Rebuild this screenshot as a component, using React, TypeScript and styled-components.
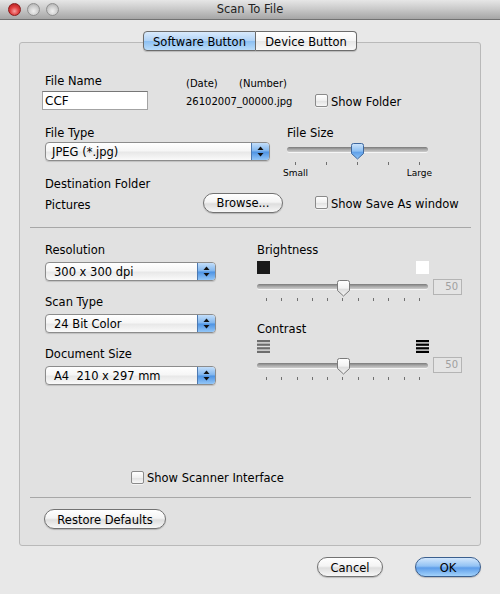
import React from "react";
import styled, { createGlobalStyle, css } from "styled-components";

const GlobalStyle = createGlobalStyle`
  html, body { margin: 0; padding: 0; }
  body {
    font-family: "DejaVu Sans", "Liberation Sans", sans-serif;
    font-size: 11.5px;
    color: #000;
    background: #e8e8e8;
  }
  * { box-sizing: border-box; }
`;

const Window = styled.div`
  width: 500px;
  height: 594px;
  background: #e8e8e8;
  display: flex;
  flex-direction: column;
  overflow: hidden;
`;

const TitleBar = styled.div`
  height: 20px;
  flex: none;
  display: grid;
  grid-template-columns: 1fr auto 1fr;
  align-items: center;
  background: linear-gradient(#e6e6e6, #cbcbcb 45%, #b3b3b3 80%, #a6a6a6);
  border-bottom: 1px solid #727272;
`;

const Lights = styled.div`
  display: flex;
  gap: 6px;
  padding-left: 8px;
`;

const Light = styled.span<{ $red?: boolean }>`
  width: 13px;
  height: 13px;
  border-radius: 50%;
  border: 1px solid ${(p) => (p.$red ? "#8a1a1a" : "#8e8e8e")};
  background: ${(p) =>
    p.$red
      ? "radial-gradient(circle at 50% 65%, #f7a0a0 0%, #e04040 45%, #a81414 100%)"
      : "radial-gradient(circle at 50% 65%, #f0f0f0 0%, #cfcfcf 50%, #a5a5a5 100%)"};
`;

const Title = styled.div`
  font-size: 11.5px;
  color: #222;
  line-height: 19px;
`;

const Body = styled.div`
  flex: 1;
  display: flex;
  flex-direction: column;
  padding: 11px 19px 0 19px;
`;

const Tabs = styled.div`
  align-self: center;
  display: flex;
  height: 20px;
  margin-bottom: -9px;
  position: relative;
  z-index: 1;
  box-shadow: 0 1px 1px rgba(0, 0, 0, 0.18);
  border-radius: 4px;
`;

const Tab = styled.div<{ $w: number; $active?: boolean; $first?: boolean }>`
  width: ${(p) => p.$w}px;
  height: 20px;
  border: 1px solid #6c6c6c;
  display: flex;
  align-items: center;
  justify-content: center;
  padding-top: 1px;
  ${(p) =>
    p.$first
      ? css`
          border-radius: 4px 0 0 4px;
        `
      : css`
          border-left: none;
          border-radius: 0 4px 4px 0;
        `}
  background: ${(p) =>
    p.$active
      ? "linear-gradient(#d9eafc, #b1d3f6 48%, #8dc0f2 52%, #b9dcfa)"
      : "linear-gradient(#ffffff, #f5f5f5 48%, #e7e7e7 52%, #f8f8f8)"};
`;

const Group = styled.div`
  height: 504px;
  border: 1px solid #b9b9b9;
  border-radius: 3px;
  background: #e1e1e1;
  display: flex;
  flex-direction: column;
  padding: 29px 0 16px 0;
`;

const TopSection = styled.div`
  padding-left: 22px;
  display: flex;
  flex-direction: column;
`;

const FileGrid = styled.div`
  display: grid;
  grid-template-columns: 144px 129px auto;
  grid-template-rows: 14px 19px;
  row-gap: 5px;
  align-items: center;
`;

const Label = styled.div<{ $indent?: number; $top?: number }>`
  align-self: start;
  line-height: 14px;
  padding-top: 2px;
  margin-bottom: -2px;
  margin-top: ${(p) => p.$top ?? 0}px;
  padding-left: ${(p) => p.$indent ?? 0}px;
  white-space: nowrap;
`;

const SmallHeads = styled.div`
  display: flex;
  align-self: start;
  margin-top: 6px;
  font-size: 10px;
  line-height: 12px;
`;

const SmallHead = styled.span<{ $w?: number }>`
  width: ${(p) => (p.$w ? `${p.$w}px` : "auto")};
`;

const SmallText = styled.div`
  font-size: 10px;
  line-height: 19px;
  padding-top: 1px;
`;

const TextField = styled.div`
  width: 106px;
  height: 19px;
  background: #fff;
  border: 1px solid #a3a3a3;
  border-top-color: #777;
  padding-left: 2px;
  line-height: 18px;
  font-size: 12px;
`;

const CheckRow = styled.label<{ $indent?: number }>`
  display: flex;
  align-items: center;
  gap: 3px;
  margin-left: ${(p) => p.$indent ?? 0}px;
  white-space: nowrap;
  line-height: 14px;
`;

const CheckText = styled.span`
  padding-top: 2px;
`;

const CheckBox = styled.span`
  width: 13px;
  height: 13px;
  flex: none;
  border: 1px solid #8a8a8a;
  border-radius: 2px;
  background: linear-gradient(#ffffff, #f0f0f0 50%, #e2e2e2 55%, #f7f7f7);
  box-shadow: 0 1px 0 rgba(255, 255, 255, 0.6);
`;

const TypeRow = styled.div`
  display: flex;
  height: 37px;
  margin-top: 14px;
  align-items: flex-start;
`;

const FieldBlock = styled.div<{ $w?: number; $indent?: number }>`
  width: ${(p) => (p.$w ? `${p.$w}px` : "auto")};
  padding-left: ${(p) => p.$indent ?? 0}px;
  display: flex;
  flex-direction: column;
  flex: none;
`;

const PopupWrap = styled.div<{ $w: number; $gap: number }>`
  width: ${(p) => p.$w}px;
  height: 19px;
  margin-top: ${(p) => p.$gap}px;
  display: flex;
  border: 1px solid #8c8c8c;
  border-radius: 4px;
  overflow: hidden;
  background: linear-gradient(#ffffff, #f6f6f6 45%, #e8e8e8 55%, #fafafa);
  box-shadow: 0 1px 1px rgba(0, 0, 0, 0.15);
`;

const PopupText = styled.span<{ $pad: number }>`
  flex: 1;
  padding-left: ${(p) => p.$pad}px;
  line-height: 18px;
  white-space: pre;
`;

const PopupArrow = styled.span`
  width: 18px;
  flex: none;
  border-left: 1px solid #4d79b0;
  background: linear-gradient(#c3defa, #7fb5ee 48%, #4c92e3 52%, #93c6f7);
  display: flex;
  align-items: center;
  justify-content: center;
`;

const SliderBox = styled.div<{ $w: number; $h: number; $top?: number }>`
  position: relative;
  width: ${(p) => p.$w}px;
  height: ${(p) => p.$h}px;
  margin-top: ${(p) => p.$top ?? 0}px;
  flex: none;
`;

const Track = styled.div<{ $top: number }>`
  position: absolute;
  left: 0;
  right: 0;
  top: ${(p) => p.$top}px;
  height: 5px;
  border-radius: 3px;
  background: linear-gradient(#7a7a7a, #a9a9a9 50%, #cdcdcd);
  box-shadow: 0 1px 0 rgba(255, 255, 255, 0.7);
`;

const ThumbSvg = styled.svg<{ $left: number; $top: number }>`
  position: absolute;
  left: ${(p) => p.$left}px;
  top: ${(p) => p.$top}px;
`;

const Ticks = styled.div<{ $w: number; $left: number; $top: number }>`
  width: ${(p) => p.$w}px;
  margin-left: ${(p) => p.$left}px;
  margin-top: ${(p) => p.$top}px;
  height: 3px;
  display: flex;
  justify-content: space-between;
`;

const Tick = styled.span`
  width: 1px;
  height: 3px;
  background: #707070;
`;

const ScaleLabels = styled.div`
  display: flex;
  justify-content: space-between;
  margin: 3px -4px 0 -4px;
  font-size: 9px;
  line-height: 10px;
`;

const DestRow = styled.div`
  display: flex;
  align-items: center;
  height: 19px;
  margin-top: 4px;
`;

const PushButton = styled.button<{ $w: number; $primary?: boolean }>`
  width: ${(p) => p.$w}px;
  height: 20px;
  flex: none;
  padding: 1px 0 0 0;
  border-radius: 10px;
  font-family: "DejaVu Sans", "Liberation Sans", sans-serif;
  font-size: 11.5px;
  color: #000;
  border: 1px solid ${(p) => (p.$primary ? "#3b5f8e" : "#727272")};
  background: ${(p) =>
    p.$primary
      ? "linear-gradient(#d3e7fc, #92c2f4 45%, #5d9de9 55%, #a2d2fb)"
      : "linear-gradient(#ffffff, #f4f4f4 45%, #dedede 55%, #f7f7f7)"};
  box-shadow: 0 1px 1px rgba(0, 0, 0, 0.2);
`;

const Separator = styled.div<{ $top: number }>`
  height: 1px;
  margin: ${(p) => p.$top}px 9px 0 10px;
  background: #a7a7a7;
  flex: none;
`;

const LowerSection = styled.div`
  display: flex;
  margin-top: 13px;
  padding-left: 25px;
`;

const LeftCol = styled.div`
  width: 212px;
  display: flex;
  flex-direction: column;
  gap: 12px;
`;

const RightCol = styled.div`
  display: flex;
  flex-direction: column;
`;

const IconRow = styled.div<{ $top: number }>`
  width: 172px;
  height: 13px;
  margin-top: ${(p) => p.$top}px;
  display: flex;
  justify-content: space-between;
`;

const Swatch = styled.span<{ $color: string }>`
  width: 13px;
  height: 13px;
  background: ${(p) => p.$color};
`;

const SliderRow = styled.div<{ $top: number }>`
  display: flex;
  gap: 5px;
  margin-top: ${(p) => p.$top}px;
`;

const ValueBox = styled.div`
  width: 29px;
  height: 16px;
  border: 1px solid #b4b4b4;
  background: #e4e4e4;
  color: #a0a0a0;
  font-size: 10px;
  line-height: 14px;
  text-align: right;
  padding-right: 3px;
`;

const ScannerRow = styled.div`
  margin-top: auto;
  padding-left: 111px;
  display: flex;
`;

const RestoreRow = styled.div`
  margin-top: 11px;
  padding-left: 24px;
  display: flex;
`;

const Footer = styled.div`
  display: flex;
  justify-content: flex-end;
  gap: 32px;
  padding: 11px 0 0 0;
`;

const ArrowIcon = () => (
  <svg width="7" height="11" viewBox="0 0 7 11">
    <path d="M3.5 0.5 L6.5 4 L0.5 4 Z" fill="#111" />
    <path d="M3.5 10.5 L6.5 7 L0.5 7 Z" fill="#111" />
  </svg>
);

const Popup: React.FC<{ w: number; gap: number; pad?: number; children: React.ReactNode }> = ({
  w,
  gap,
  pad = 8,
  children,
}) => (
  <PopupWrap $w={w} $gap={gap}>
    <PopupText $pad={pad}>{children}</PopupText>
    <PopupArrow>
      <ArrowIcon />
    </PopupArrow>
  </PopupWrap>
);

const Thumb: React.FC<{ left: number; top: number; blue?: boolean; id: string }> = ({ left, top, blue, id }) => (
  <ThumbSvg $left={left} $top={top} width="13" height="17" viewBox="0 0 13 17">
    <defs>
      <linearGradient id={id} x1="0" y1="0" x2="0" y2="1">
        {blue ? (
          <>
            <stop offset="0" stopColor="#cfe5fb" />
            <stop offset="0.5" stopColor="#8cbff3" />
            <stop offset="0.55" stopColor="#5f9fe8" />
            <stop offset="1" stopColor="#8ec4f6" />
          </>
        ) : (
          <>
            <stop offset="0" stopColor="#ffffff" />
            <stop offset="0.5" stopColor="#f2f2f2" />
            <stop offset="0.55" stopColor="#dcdcdc" />
            <stop offset="1" stopColor="#f4f4f4" />
          </>
        )}
      </linearGradient>
    </defs>
    <path
      d="M0.5 2.5 Q0.5 0.5 2.5 0.5 H10.5 Q12.5 0.5 12.5 2.5 V10.5 L6.5 16 L0.5 10.5 Z"
      fill={`url(#${id})`}
      stroke={blue ? "#3d679e" : "#7a7a7a"}
      strokeWidth="1"
    />
  </ThumbSvg>
);

const TickRow: React.FC<{ n: number; w: number; left: number; top: number }> = ({ n, w, left, top }) => (
  <Ticks $w={w} $left={left} $top={top}>
    {Array.from({ length: n }).map((_, i) => (
      <Tick key={i} />
    ))}
  </Ticks>
);

const Stripes: React.FC<{ color: string }> = ({ color }) => (
  <svg width="13" height="13" viewBox="0 0 13 13">
    {[0, 3.6, 7.2, 10.8].map((y) => (
      <rect key={y} x="0" y={y} width="13" height="2.2" fill={color} />
    ))}
  </svg>
);

const Check: React.FC<{ indent?: number; children: React.ReactNode }> = ({ indent, children }) => (
  <CheckRow $indent={indent}>
    <CheckBox />
    <CheckText>{children}</CheckText>
  </CheckRow>
);

export default function App() {
  return (
    <>
      <GlobalStyle />
      <Window>
        <TitleBar>
          <Lights>
            <Light $red />
            <Light />
            <Light />
          </Lights>
          <Title>Scan To File</Title>
          <span />
        </TitleBar>
        <Body>
          <Tabs>
            <Tab $w={113} $active $first>
              Software Button
            </Tab>
            <Tab $w={101}>Device Button</Tab>
          </Tabs>
          <Group>
            <TopSection>
              <FileGrid>
                <Label $indent={3}>File Name</Label>
                <SmallHeads>
                  <SmallHead $w={53}>(Date)</SmallHead>
                  <SmallHead>(Number)</SmallHead>
                </SmallHeads>
                <span />
                <TextField>CCF</TextField>
                <SmallText>26102007_00000.jpg</SmallText>
                <Check>Show Folder</Check>
              </FileGrid>

              <TypeRow>
                <FieldBlock $w={245} $indent={3}>
                  <Label>File Type</Label>
                  <Popup w={225} gap={4} pad={6}>
                    JPEG (*.jpg)
                  </Popup>
                </FieldBlock>
                <FieldBlock>
                  <Label>File Size</Label>
                  <SliderBox $w={141} $h={16} $top={5}>
                    <Track $top={4} />
                    <Thumb id="thumbSize" left={64} top={0} blue />
                  </SliderBox>
                  <TickRow n={5} w={125} left={8} top={3} />
                  <ScaleLabels>
                    <span>Small</span>
                    <span>Large</span>
                  </ScaleLabels>
                </FieldBlock>
              </TypeRow>

              <Label $indent={3} $top={14}>
                Destination Folder
              </Label>
              <DestRow>
                <FieldBlock $w={161} $indent={3}>
                  <Label>Pictures</Label>
                </FieldBlock>
                <PushButton $w={80}>Browse...</PushButton>
                <Check indent={32}>Show Save As window</Check>
              </DestRow>
            </TopSection>

            <Separator $top={15} />

            <LowerSection>
              <LeftCol>
                <FieldBlock>
                  <Label>Resolution</Label>
                  <Popup w={171} gap={7}>
                    300 x 300 dpi
                  </Popup>
                </FieldBlock>
                <FieldBlock>
                  <Label>Scan Type</Label>
                  <Popup w={171} gap={7}>
                    24 Bit Color
                  </Popup>
                </FieldBlock>
                <FieldBlock>
                  <Label>Document Size</Label>
                  <Popup w={171} gap={7}>
                    {"A4  210 x 297 mm"}
                  </Popup>
                </FieldBlock>
              </LeftCol>

              <RightCol>
                <Label>Brightness</Label>
                <IconRow $top={6}>
                  <Swatch $color="#1a1a1a" />
                  <Swatch $color="#ffffff" />
                </IconRow>
                <SliderRow $top={5}>
                  <SliderBox $w={171} $h={17}>
                    <Track $top={5} />
                    <Thumb id="thumbBright" left={80} top={1} />
                  </SliderBox>
                  <ValueBox>50</ValueBox>
                </SliderRow>
                <TickRow n={11} w={154} left={9} top={2} />

                <Label $top={19}>Contrast</Label>
                <IconRow $top={6}>
                  <Stripes color="#6d6d6d" />
                  <Stripes color="#000000" />
                </IconRow>
                <SliderRow $top={4}>
                  <SliderBox $w={171} $h={17}>
                    <Track $top={6} />
                    <Thumb id="thumbContrast" left={80} top={1} />
                  </SliderBox>
                  <ValueBox>50</ValueBox>
                </SliderRow>
                <TickRow n={11} w={154} left={9} top={3} />
              </RightCol>
            </LowerSection>

            <ScannerRow>
              <Check>Show Scanner Interface</Check>
            </ScannerRow>
            <Separator $top={12} />
            <RestoreRow>
              <PushButton $w={122}>Restore Defaults</PushButton>
            </RestoreRow>
          </Group>
          <Footer>
            <PushButton $w={66}>Cancel</PushButton>
            <PushButton $w={66} $primary>
              OK
            </PushButton>
          </Footer>
        </Body>
      </Window>
    </>
  );
}
